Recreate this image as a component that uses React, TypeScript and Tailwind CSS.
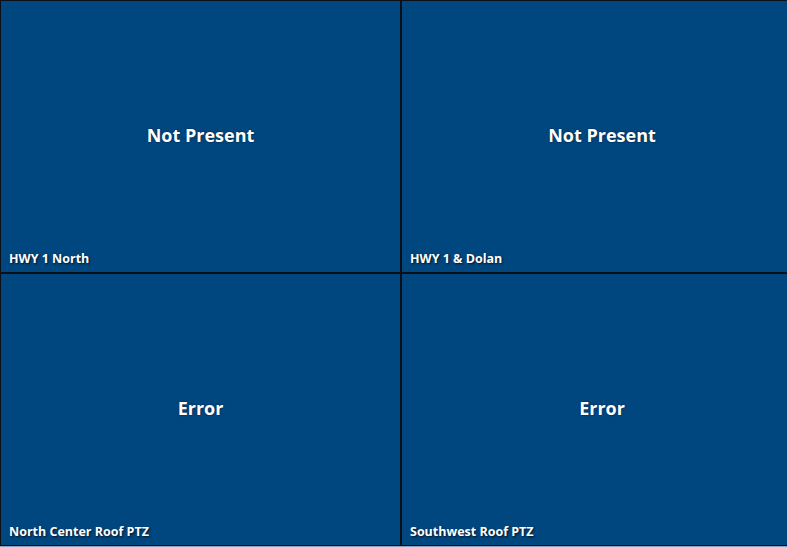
import React from 'react';

interface Feed {
  name: string;
  status: string;
}

const feeds: Feed[] = [
  { name: 'HWY 1 North', status: 'Not Present' },
  { name: 'HWY 1 & Dolan', status: 'Not Present' },
  { name: 'North Center Roof PTZ', status: 'Error' },
  { name: 'Southwest Roof PTZ', status: 'Error' },
];

function FeedTile({ feed }: { feed: Feed }) {
  return (
    <div className="relative bg-[#00467f] flex items-center justify-center">
      <span className="text-white font-bold text-[18px] -mt-[2px] [text-shadow:0_0_2px_rgba(0,0,0,0.6)]">
        {feed.status}
      </span>
      <span className="absolute left-[8px] bottom-[3px] text-white font-bold text-[12.5px] [text-shadow:1px_1px_2px_rgba(0,0,0,0.7)]">
        {feed.name}
      </span>
    </div>
  );
}

export default function App() {
  return (
    <div className="w-[787px] h-[547px] bg-[#8aa3b8] overflow-hidden" style={{ fontFamily: '"Open Sans", "Noto Sans", sans-serif' }}>
      <div className="h-[546px] bg-[#0a0f18] pt-px pl-px grid grid-cols-[399px_400px] grid-rows-[271px_271px] gap-[2px] w-[803px]">
        {feeds.map((feed) => (
          <FeedTile key={feed.name} feed={feed} />
        ))}
      </div>
    </div>
  );
}
